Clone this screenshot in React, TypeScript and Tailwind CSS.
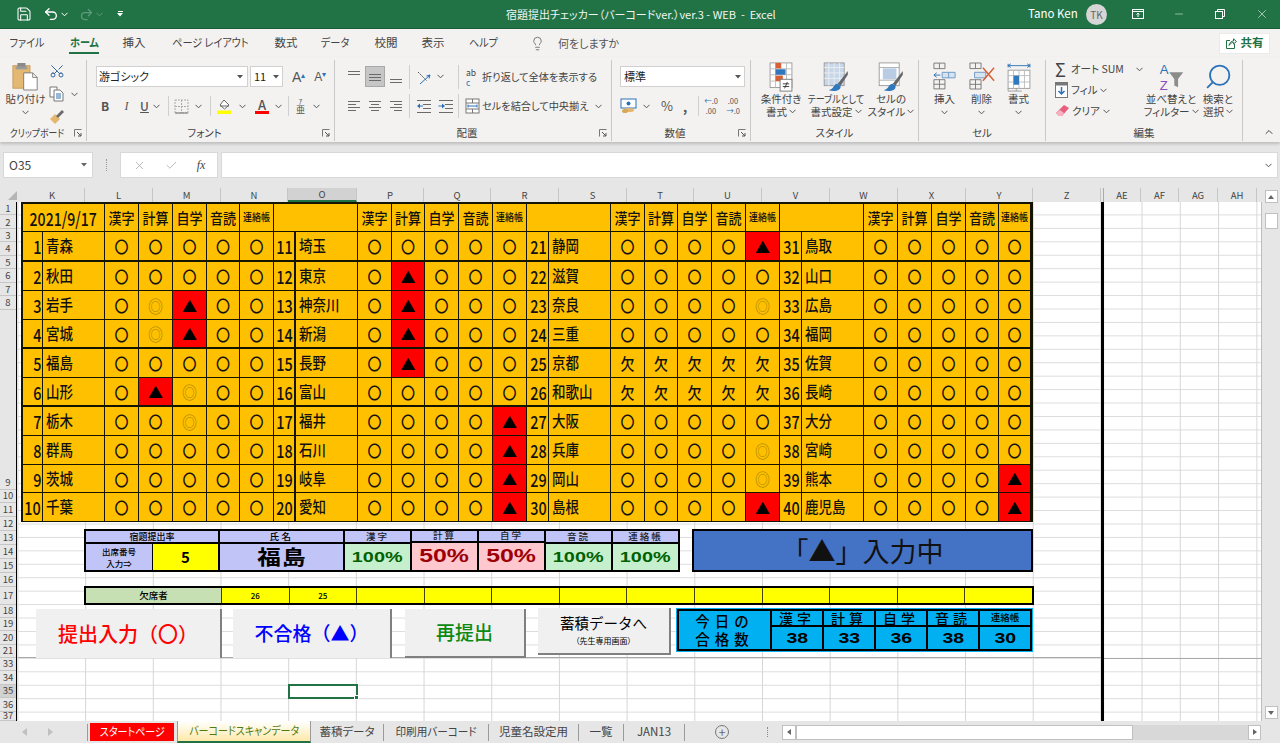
import React from 'react';
import { Save, Undo2, Redo2, Lightbulb, Scissors, X, Minus, Check, ChevronUp, Search } from 'lucide-react';

const Chev = ({ className = '' }: { className?: string }) => (
  <svg width="7" height="5" viewBox="0 0 7 5" className={`shrink-0 ${className}`}>
    <path d="M0.5 0.8 L3.5 3.8 L6.5 0.8" fill="none" stroke="#555" strokeWidth="1" />
  </svg>
);
const Launcher = () => (
  <svg width="8" height="8" viewBox="0 0 8 8" className="shrink-0">
    <path d="M0.5 7.5 V0.5 H7.5" fill="none" stroke="#777" />
    <path d="M3 3 L7 7 M7 4 V7 H4" fill="none" stroke="#555" />
  </svg>
);
const Sep = ({ h = 'h-[24px]' }: { h?: string }) => <div className={`w-px bg-[#cfcfcf] shrink-0 ${h}`} />;

const Lines = ({ rows, color = '#6a6a6a' }: { rows: number[][]; color?: string }) => (
  <svg width="16" height="16" viewBox="0 0 16 16" className="shrink-0">
    {rows.map((r, i) => (
      <rect key={i} x={r[0]} y={r[1]} width={r[2]} height="1" fill={color} />
    ))}
  </svg>
);
const Indent = ({ dir }: { dir: 'l' | 'r' }) => (
  <svg width="16" height="16" viewBox="0 0 16 16" className="shrink-0">
    {[2, 6, 10, 14].map((y) => (
      <rect key={y} x={y === 2 || y === 14 ? 1 : 7} y={y} width={y === 2 || y === 14 ? 14 : 8} height="1" fill="#6a6a6a" />
    ))}
    <path d={dir === 'l' ? 'M1 8 L4 5.5 V7.5 H7 V8.5 H4 V10.5 Z' : 'M7 8 L4 5.5 V7.5 H0.5 V8.5 H4 V10.5 Z'} fill="#2a71b8" />
  </svg>
);

const Paste = () => (
  <svg width="27" height="29" viewBox="0 0 30 32">
    <rect x="1" y="4" width="19" height="25" fill="#e3b873" stroke="#c79a55" />
    <rect x="6" y="1" width="9" height="6" fill="#8a8a8a" />
    <rect x="4" y="5" width="13" height="3" fill="#9a9a9a" />
    <path d="M13 12 H23 L28 17 V31 H13 Z" fill="#fff" stroke="#777" />
    <path d="M23 12 V17 H28" fill="none" stroke="#777" />
  </svg>
);
const CopyIc = () => (
  <svg width="16" height="16" viewBox="0 0 16 16">
    <path d="M1 1 H8 V11 H1 Z" fill="#fff" stroke="#777" />
    <path d="M5 4 H11 L14 7 V15 H5 Z" fill="#fff" stroke="#777" />
    <path d="M7 8 H12 M7 10 H12 M7 12 H12" stroke="#2a71b8" />
  </svg>
);
const Brush = () => (
  <svg width="16" height="16" viewBox="0 0 16 16">
    <path d="M1 10 L6 5 L11 10 L6 15 Z" fill="#e5b66d" />
    <path d="M7 7 L13 1 L15 3 L9 9 Z" fill="#6a6a6a" />
  </svg>
);
const Borders = () => (
  <svg width="15" height="15" viewBox="0 0 15 15">
    <rect x="1" y="1" width="13" height="13" fill="none" stroke="#aaa" strokeDasharray="2 1" />
    <path d="M7.5 1 V14 M1 7.5 H14" stroke="#aaa" strokeDasharray="2 1" />
    <path d="M1 14 H14" stroke="#777" />
  </svg>
);
const Fill = () => (
  <svg width="15" height="16" viewBox="0 0 15 16">
    <path d="M3 7 L7 2 L12 7 L7.5 11 Z" fill="#fff" stroke="#666" />
    <path d="M3 8 H12" stroke="#666" />
    <rect x="0" y="12.5" width="14" height="3.5" fill="#ffff00" />
  </svg>
);
const Orient = () => (
  <svg width="16" height="16" viewBox="0 0 16 16">
    <path d="M2 3 L11 12" stroke="#555" strokeWidth="1" strokeDasharray="2 1" />
    <path d="M14 6 L4 15 M14 6 L10.5 7 M14 6 L13 9.5" fill="none" stroke="#2a71b8" strokeWidth="1" />
  </svg>
);
const Merge = () => (
  <svg width="15" height="16" viewBox="0 0 15 16">
    <rect x="1" y="1" width="13" height="14" fill="#fff" stroke="#777" />
    <path d="M1 5 H14 M1 11 H14 M7.5 1 V5 M7.5 11 V15" stroke="#777" />
    <path d="M3 8 H12" stroke="#2a71b8" />
    <path d="M3 6.5 V9.5 M12 6.5 V9.5" stroke="#2a71b8" />
  </svg>
);
const Currency = () => (
  <svg width="18" height="16" viewBox="0 0 18 16">
    <rect x="1" y="1" width="15" height="9" fill="#fff" stroke="#2a71b8" />
    <circle cx="8.5" cy="5.5" r="2" fill="#2a71b8" />
    <ellipse cx="9" cy="12" rx="5" ry="2" fill="#e5b66d" />
    <ellipse cx="5" cy="13" rx="3" ry="2" fill="#d8a757" />
  </svg>
);
const CondFmt = () => (
  <svg width="24" height="30" viewBox="0 0 26 33">
    <rect x="1" y="1" width="24" height="27" fill="#fff" stroke="#999" />
    <path d="M7 1 V28 M13 1 V28 M19 1 V28 M1 7.5 H25 M1 14 H25 M1 21 H25" stroke="#bbb" />
    <rect x="7" y="1" width="6" height="6" fill="#d95f35" />
    <rect x="7" y="8" width="11" height="6" fill="#2f78bd" />
    <rect x="7" y="15" width="8" height="6" fill="#d95f35" />
    <rect x="12" y="19" width="13" height="13" fill="#fff" stroke="#777" />
    <path d="M15 24 H22 M15 27 H22 M20 22 L17 29" stroke="#333" />
  </svg>
);
const TableFmt = () => (
  <svg width="26" height="30" viewBox="0 0 28 33">
    <rect x="1" y="1" width="22" height="25" fill="#c6d7ea" stroke="#999" />
    <path d="M6 1 V26 M12 1 V26 M18 1 V26 M1 6 H23 M1 12 H23 M1 18 H23" stroke="#eee" />
    <path d="M27 10 L16 24 L19 26 L27 14 Z" fill="#666" />
    <path d="M16 24 C11 24 12 30 6 31 C13 33 20 31 19 26 Z" fill="#2f78bd" />
  </svg>
);
const CellSt = () => (
  <svg width="26" height="30" viewBox="0 0 28 33">
    <rect x="1" y="1" width="22" height="25" fill="#fff" stroke="#999" />
    <rect x="5" y="7" width="15" height="12" fill="#b8cde4" />
    <path d="M1 6 H23 M1 20 H23" stroke="#aaa" />
    <path d="M27 10 L16 24 L19 26 L27 14 Z" fill="#666" />
    <path d="M16 24 C11 24 12 30 6 31 C13 33 20 31 19 26 Z" fill="#2f78bd" />
  </svg>
);
const Ins = () => (
  <svg width="23" height="28" viewBox="0 0 25 30">
    <path d="M1 1 H13 V7 H1 Z M7 1 V7" fill="none" stroke="#777" />
    <path d="M10 11 H24 V17 H10 Z M17 11 V17" fill="#d6e4f2" stroke="#6a96c2" />
    <path d="M1 14 H8 M1 14 L4 11.5 M1 14 L4 16.5" fill="none" stroke="#2a71b8" />
    <path d="M1 19 H13 V29 H1 Z M7 19 V29 M1 24 H13" fill="none" stroke="#777" />
  </svg>
);
const Del = () => (
  <svg width="26" height="28" viewBox="0 0 28 30">
    <path d="M1 1 H13 V7 H1 Z M7 1 V7" fill="none" stroke="#777" />
    <path d="M6 11 H18 V17 H6 Z" fill="#d6e4f2" stroke="#6a96c2" />
    <path d="M1 19 H13 V29 H1 Z M7 19 V29 M1 24 H13" fill="none" stroke="#777" />
    <path d="M15 6 L27 20 M27 6 L15 20" stroke="#d95f35" strokeWidth="1.6" />
  </svg>
);
const Fmt = () => (
  <svg width="24" height="30" viewBox="0 0 26 33">
    <path d="M1 2 V6 M25 2 V6 M1 4 H25 M1 4 L4 2 M1 4 L4 6 M25 4 L22 2 M25 4 L22 6" fill="none" stroke="#2a71b8" />
    <rect x="1" y="9" width="24" height="20" fill="#fff" stroke="#999" />
    <path d="M7 9 V29 M13 9 V29 M19 9 V29 M1 15 H25 M1 22 H25" stroke="#bbb" />
    <rect x="7" y="15" width="6" height="10" fill="#2f78bd" />
    <path d="M1 29 V32 H10 M10 29 V32 H16" fill="none" stroke="#999" />
  </svg>
);
const Sort = () => (
  <svg width="27" height="30" viewBox="0 0 27 32">
    <text x="1" y="13" fontSize="14" fontFamily="'Liberation Sans',sans-serif" fill="#2a71b8">A</text>
    <text x="1" y="30" fontSize="14" fontFamily="'Liberation Sans',sans-serif" fill="#8a4fb5">Z</text>
    <path d="M11 11 H26 L20.5 18 V27 L16.5 25 V18 Z" fill="#8c8c8c" />
  </svg>
);
const Eraser = () => (
  <svg width="16" height="14" viewBox="0 0 16 14">
    <path d="M1 9 L9 1 L14 4 L7 12 H4 Z" fill="#e85f7e" />
    <path d="M1 9 L4 12 H7 L9 9 L5 6 Z" fill="#f6b2bf" />
  </svg>
);
const FillDown = () => (
  <svg width="13" height="16" viewBox="0 0 13 16">
    <rect x="0.5" y="0.5" width="12" height="15" fill="#fff" stroke="#777" />
    <rect x="0.5" y="0.5" width="12" height="3" fill="#777" />
    <path d="M6.5 5 V12 M3.5 9 L6.5 12 L9.5 9" fill="none" stroke="#2a71b8" strokeWidth="1.5" />
  </svg>
);

const MenuItem = ({ t, w, bold, kana }: { t: string; w: string; bold?: boolean; kana?: boolean }) => (
  <div className={`flex flex-col items-center justify-center relative shrink-0 ${w}`}>
    <span className={`text-[11.5px] whitespace-nowrap ${kana ? 'scale-x-[0.88]' : ''} ${bold ? 'font-bold text-[#217346]' : 'text-[#444]'}`}>{t}</span>
    {bold && <div className="absolute bottom-[3px] h-[2px] w-[30px] bg-[#217346]" />}
  </div>
);

const Group = ({ w, label, launcher, tight, children }: { w: string; label: string; launcher?: boolean; tight?: boolean; children: React.ReactNode }) => (
  <div className={`shrink-0 h-[81px] mt-[3px] flex flex-col border-r border-[#c8c8c8] ${w}`}>
    <div className="flex-1 min-h-0 flex">{children}</div>
    <div className="h-[16px] flex items-center text-[10.5px] text-[#444]">
      <div className={`flex-1 text-center whitespace-nowrap ${tight ? 'scale-x-[0.84]' : ''}`}>{label}</div>
      {launcher && <div className="w-[12px] flex"><Launcher /></div>}
    </div>
  </div>
);

const BigBtn = ({ w, icon, l1, l2, narrow }: { w: string; icon: React.ReactNode; l1: string; l2: string; narrow?: boolean }) => (
  <div className={`shrink-0 flex flex-col items-center text-[10.5px] leading-[13px] text-[#444] ${w}`}>
    <div className="h-[31px] pt-[2px] flex items-start">{icon}</div>
    <div className={`mt-[1px] whitespace-nowrap ${narrow ? 'scale-x-[0.86]' : ''}`}>{l1}</div>
    <div className="whitespace-nowrap flex items-center gap-[2px]">{l2}<Chev /></div>
  </div>
);

type G = [number, string, string][];
const groups: G[] = [
  [[1,'青森','ooooo'],[2,'秋田','ooooo'],[3,'岩手','odtoo'],[4,'宮城','odtoo'],[5,'福島','ooooo'],[6,'山形','otdoo'],[7,'栃木','oodoo'],[8,'群馬','ooooo'],[9,'茨城','ooooo'],[10,'千葉','ooooo']],
  [[11,'埼玉','ooooo'],[12,'東京','otooo'],[13,'神奈川','otooo'],[14,'新潟','otooo'],[15,'長野','otooo'],[16,'富山','ooooo'],[17,'福井','oooot'],[18,'石川','oooot'],[19,'岐阜','oooot'],[20,'愛知','oooot']],
  [[21,'静岡','oooot'],[22,'滋賀','ooooo'],[23,'奈良','ooood'],[24,'三重','ooooo'],[25,'京都','kkkkk'],[26,'和歌山','kkkkk'],[27,'大阪','ooooo'],[28,'兵庫','ooood'],[29,'岡山','ooood'],[30,'島根','oooot']],
  [[31,'鳥取','ooooo'],[32,'山口','ooooo'],[33,'広島','ooooo'],[34,'福岡','ooooo'],[35,'佐賀','ooooo'],[36,'長崎','ooooo'],[37,'大分','ooooo'],[38,'宮崎','ooooo'],[39,'熊本','oooot'],[40,'鹿児島','oooot']],
];
const heads = ['漢字', '計算', '自学', '音読', '連絡帳'];

const cellBase = 'flex items-center justify-center border-r border-[#141400] bg-[#ffc000] text-[#111] overflow-hidden';

const Mark = ({ v, b }: { v: string; b: string }) => {
  if (v === 't')
    return <div className={`${cellBase} ${b} !bg-[#ff0000]`}><span className="text-[15px] leading-none text-black">▲</span></div>;
  if (v === 'd')
    return <div className={`${cellBase} ${b}`}><span className="text-[15px] leading-none text-[#a98300] scale-y-[1.1]">◎</span></div>;
  if (v === 'k')
    return <div className={`${cellBase} ${b}`}><span className="text-[14px] leading-none font-medium scale-y-[1.15]">欠</span></div>;
  return <div className={`${cellBase} ${b}`}><span className="text-[14px] leading-none font-medium scale-y-[1.15]">〇</span></div>;
};

const HeadRow = () => (
  <>
    {groups.map((_, g) => (
      <React.Fragment key={g}>
        <div className={`${cellBase} col-span-2 border-b text-[16px] font-medium`}>
          {g === 0 && <span className="scale-x-[0.88] scale-y-[1.15] whitespace-nowrap">2021/9/17</span>}
        </div>
        {heads.map((h) => (
          <div key={h} className={`${cellBase} border-b`}>
            <span className={`whitespace-nowrap font-medium scale-y-[1.15] ${h === '連絡帳' ? 'text-[9px]' : 'text-[13px]'}`}>{h}</span>
          </div>
        ))}
      </React.Fragment>
    ))}
  </>
);

const Stat = ({ h, v, ok }: { h: string; v: string; ok: boolean }) => (
  <div className="w-[67px] flex flex-col shrink-0 border-r-2 border-black">
    <div className="h-[13px] bg-[#c0c4f6] border-b-2 border-black flex items-center justify-center text-[9.5px] font-medium text-[#222] tracking-[2px] leading-none">{h}</div>
    <div className={`flex-1 flex items-center justify-center ${ok ? 'bg-[#c6efce] text-[#006100]' : 'bg-[#ffc7ce] text-[#9c0006]'}`}>
      <span className={`[font-family:'Liberation_Sans',sans-serif] font-bold ${ok ? 'text-[15px] scale-x-[1.32]' : 'text-[18px] scale-x-[1.38]'}`}>{v}</span>
    </div>
  </div>
);

const colHeads: [string, string, boolean?][] = [
  ['K','w-[65px]'],['L','w-[68px]'],['M','w-[68px]'],['N','w-[67px]'],['O','w-[69px]',true],['P','w-[67px]'],['Q','w-[67px]'],['R','w-[68px]'],['S','w-[68px]'],['T','w-[67px]'],['U','w-[68px]'],['V','w-[68px]'],['W','w-[68px]'],['X','w-[68px]'],['Y','w-[67px]'],['Z','w-[68px]'],
];
const rh1 = [1,2,3,4,5,6,7,8];
const rh2: [number, string][] = [[9,'h-[13px]'],[10,'h-[13px]'],[11,'h-[14px]'],[12,'h-[14px]'],[13,'h-[14px]'],[14,'h-[14px]'],[15,'h-[14px]'],[16,'h-[14px]'],[17,'h-[18px]'],[18,'h-[13px]'],[19,'h-[13px]'],[20,'h-[14px]'],[21,'h-[13px]'],[33,'h-[13px]'],[34,'h-[14px]'],[35,'h-[13px]'],[36,'h-[14px]'],[37,'h-[9px]']];

const SheetTab = ({ t, w, kana }: { t: string; w: string; kana?: boolean }) => (
  <div className={`shrink-0 flex items-center justify-center border-r border-[#9a9a9a] h-[17px] text-[11.5px] text-[#444] whitespace-nowrap ${w}`}>
    <span className={kana ? 'scale-x-[0.92]' : ''}>{t}</span>
  </div>
);

export default function App() {
  return (
    <div className="w-[1280px] h-[743px] overflow-hidden flex flex-col bg-[#e6e6e6] [font-family:'Noto_Sans_CJK_JP','Liberation_Sans',sans-serif] [font-feature-settings:'palt']">
      {/* title bar */}
      <div className="h-[29px] shrink-0 bg-[#217346] border-b border-[#1a5e39] flex items-center text-white">
        <Save size={16} strokeWidth={1.6} className="ml-[16px]" />
        <Undo2 size={16} strokeWidth={2} className="ml-[11px]" />
        <svg width="7" height="5" viewBox="0 0 7 5" className="ml-[2px]"><path d="M0.5 0.8 L3.5 3.8 L6.5 0.8" fill="none" stroke="#fff" /></svg>
        <Redo2 size={15} strokeWidth={2} className="ml-[11px] text-[#5f9a7c]" />
        <svg width="7" height="5" viewBox="0 0 7 5" className="ml-[2px]"><path d="M0.5 0.8 L3.5 3.8 L6.5 0.8" fill="none" stroke="#5f9a7c" /></svg>
        <div className="ml-[14px] flex flex-col items-center gap-[1px]">
          <div className="w-[5px] h-px bg-white" />
          <svg width="6" height="4" viewBox="0 0 6 4"><path d="M0 0 H6 L3 3.5 Z" fill="#fff" /></svg>
        </div>
        <div className="w-[383px] shrink-0" />
        <div className="w-[274px] shrink-0 text-[11px] whitespace-nowrap text-[#f0f5f2]">宿題提出チェッカー（バーコードver.）ver.3 - WEB&nbsp;&nbsp;-&nbsp;&nbsp;Excel</div>
        <div className="w-[248px] shrink-0" />
        <div className="w-[54px] shrink-0 text-[11.5px] whitespace-nowrap">Tano Ken</div>
        <div className="w-[21px] h-[21px] shrink-0 ml-[4px] rounded-full bg-[#d6d6d6] text-[#666] text-[10px] flex items-center justify-center">TK</div>
        <svg width="12" height="12" viewBox="0 0 12 12" className="ml-[25px] shrink-0"><rect x="0.5" y="1.5" width="11" height="9" fill="none" stroke="#fff" /><path d="M0.5 3.5 H11.5 M6 9 V5 M4.5 6.5 L6 5 L7.5 6.5" fill="none" stroke="#fff" /></svg>
        <Minus size={12} strokeWidth={1} className="ml-[29px] shrink-0" />
        <svg width="10" height="10" viewBox="0 0 10 10" className="ml-[30px] shrink-0"><rect x="0.5" y="2.5" width="7" height="7" fill="none" stroke="#fff" /><path d="M2.5 2.5 V0.5 H9.5 V7.5 H7.5" fill="none" stroke="#fff" /></svg>
        <X size={14} strokeWidth={1} className="ml-[30px] shrink-0" />
      </div>

      {/* menu */}
      <div className="h-[28px] shrink-0 bg-[#f3f2f1] flex items-stretch">
        <MenuItem t="ファイル" w="w-[54px]" kana />
        <MenuItem t="ホーム" w="w-[60px]" bold kana />
        <MenuItem t="挿入" w="w-[40px]" />
        <MenuItem t="ページ レイアウト" w="w-[112px]" kana />
        <MenuItem t="数式" w="w-[40px]" />
        <MenuItem t="データ" w="w-[58px]" kana />
        <MenuItem t="校閲" w="w-[44px]" />
        <MenuItem t="表示" w="w-[50px]" />
        <MenuItem t="ヘルプ" w="w-[50px]" kana />
        <div className="flex items-center w-[711px] shrink-0 text-[#555] text-[11px]">
          <Lightbulb size={15} strokeWidth={1.2} className="ml-[22px]" />
          <span className="ml-[13px] whitespace-nowrap">何をしますか</span>
        </div>
        <div className="self-center w-[51px] h-[21px] shrink-0 bg-white border border-[#eaeaea] flex items-center justify-center gap-[4px] text-[#217346] text-[11.5px] font-bold whitespace-nowrap">
          <svg width="11" height="11" viewBox="0 0 11 11"><path d="M4 2.5 H0.5 V10.5 H8.5 V6 M3 7.5 C3.5 4.5 5.5 3 7.5 3 V0.8 L10.5 3.5 L7.5 6 V4.5 C6 4.5 4.5 5 3 7.5 Z" fill="none" stroke="#217346" /></svg>
          共有
        </div>
      </div>

      {/* ribbon */}
      <div className="h-[85px] shrink-0 bg-[#f3f2f1] flex shadow-[0_2px_3px_rgba(0,0,0,0.18)] relative text-[#444]">
        <Group w="w-[87px]" label="クリップボード" launcher tight>
          <div className="w-[49px] flex flex-col items-center pt-[2px] pl-[2px] text-[10.5px] leading-[13px]">
            <Paste />
            <div className="mt-[1px] whitespace-nowrap">貼り付け</div>
            <Chev className="mt-[5px]" />
          </div>
          <div className="flex flex-col gap-[7px] pt-[3px]">
            <Scissors size={16} strokeWidth={1.4} className="text-[#2a5f94] -rotate-90" />
            <div className="flex items-center gap-[6px]"><CopyIc /><Chev /></div>
            <Brush />
          </div>
        </Group>

        <Group w="w-[248px]" label="フォント" launcher>
          <div className="flex flex-col pl-[9px] pt-[6px]">
            <div className="flex items-center h-[21px]">
              <div className="w-[152px] h-[21px] bg-white border border-[#d0d0d0] flex items-center px-[2px] text-[11px] text-[#222] justify-between">
                <span>游ゴシック</span>
                <svg width="6" height="4" viewBox="0 0 6 4" className="mr-[2px]"><path d="M0 0 H6 L3 3.5 Z" fill="#555" /></svg>
              </div>
              <div className="w-[33px] h-[21px] ml-[2px] bg-white border border-[#d0d0d0] flex items-center px-[3px] text-[11px] text-[#222] justify-between">
                <span>11</span>
                <svg width="6" height="4" viewBox="0 0 6 4"><path d="M0 0 H6 L3 3.5 Z" fill="#555" /></svg>
              </div>
              <span className="ml-[9px] text-[14px] leading-none text-[#555] [font-family:'Liberation_Sans',sans-serif]">A<sup className="text-[8px] text-[#2a71b8]">▴</sup></span>
              <span className="ml-[9px] text-[12px] leading-none text-[#555] [font-family:'Liberation_Sans',sans-serif]">A<sup className="text-[8px] text-[#2a71b8]">▾</sup></span>
            </div>
            <div className="flex items-center h-[20px] mt-[9px] text-[12px] text-[#555]">
              <span className="w-[22px] text-center font-bold ml-[-2px]">B</span>
              <span className="w-[21px] text-center italic [font-family:'Liberation_Serif',serif]">I</span>
              <span className="w-[15px] text-center underline font-medium">U</span>
              <Chev className="ml-[1px]" />
              <div className="w-[8px]" /><Sep h="h-[20px]" /><div className="w-[5px]" />
              <Borders />
              <Chev className="ml-[6px]" />
              <div className="w-[8px]" /><Sep h="h-[20px]" /><div className="w-[6px]" />
              <Fill />
              <Chev className="ml-[7px]" />
              <div className="w-[9px] shrink-0" />
              <div className="flex flex-col items-center w-[14px] leading-[12px]">
                <span className="text-[13px] font-medium text-[#555]">A</span>
                <div className="w-[14px] h-[3px] bg-[#ff0000]" />
              </div>
              <Chev className="ml-[6px]" />
              <div className="w-[6px]" /><Sep h="h-[20px]" /><div className="w-[7px]" />
              <div className="flex flex-col items-center w-[9px]"><span className="text-[7px] leading-[8px]">ｱ</span><span className="text-[9px] leading-[10px]">亜</span></div>
              <Chev className="ml-[8px]" />
            </div>
          </div>
        </Group>

        <Group w="w-[277px]" label="配置" launcher>
          <div className="flex flex-col pl-[9px] pt-[6px]">
            <div className="flex items-center h-[21px]">
              <div className="w-[20px] flex justify-center"><Lines rows={[[2,2,12],[2,5,12]]} /></div>
              <div className="ml-[1px] w-[20px] h-[21px] bg-[#c6c6c6] border border-[#a8a8a8] flex items-center justify-center"><Lines rows={[[2,5,12],[2,8,12],[2,11,12]]} /></div>
              <div className="ml-[1px] w-[20px] flex justify-center"><Lines rows={[[2,10,12],[2,13,12]]} /></div>
              <div className="w-[3px]" /><Sep />
              <div className="ml-[6px]"><Orient /></div>
              <Chev className="ml-[5px]" />
              <div className="w-[14px]" /><Sep />
              <div className="ml-[7px] w-[13px] flex flex-col text-[8.5px] leading-[10px] text-[#444]"><span>ab</span><span className="text-[#2a71b8]">c</span></div>
              <span className="ml-[3px] text-[10.2px] whitespace-nowrap">折り返して全体を表示する</span>
            </div>
            <div className="flex items-center h-[20px] mt-[9px]">
              <div className="w-[20px] flex justify-center"><Lines rows={[[2,3,12],[2,6,8],[2,9,12],[2,12,8]]} /></div>
              <div className="ml-[1px] w-[20px] flex justify-center"><Lines rows={[[2,3,12],[4,6,8],[2,9,12],[4,12,8]]} /></div>
              <div className="ml-[1px] w-[20px] flex justify-center"><Lines rows={[[2,3,12],[6,6,8],[2,9,12],[6,12,8]]} /></div>
              <div className="w-[3px]" /><Sep />
              <div className="ml-[6px]"><Indent dir="l" /></div>
              <div className="ml-[6px]"><Indent dir="r" /></div>
              <div className="w-[4px]" /><Sep />
              <div className="ml-[6px]"><Merge /></div>
              <span className="ml-[2px] text-[10.2px] whitespace-nowrap">セルを結合して中央揃え</span>
              <Chev className="ml-[7px]" />
            </div>
          </div>
        </Group>

        <Group w="w-[139px]" label="数値" launcher>
          <div className="flex flex-col pl-[8px] pt-[6px]">
            <div className="w-[125px] h-[21px] bg-white border border-[#d0d0d0] flex items-center justify-between px-[3px] text-[11px] text-[#222]">
              <span>標準</span>
              <svg width="6" height="4" viewBox="0 0 6 4"><path d="M0 0 H6 L3 3.5 Z" fill="#555" /></svg>
            </div>
            <div className="flex items-center h-[20px] mt-[9px] text-[#555]">
              <Currency />
              <Chev className="ml-[5px]" />
              <span className="ml-[9px] text-[13px] w-[16px] text-center">%</span>
              <span className="ml-[5px] text-[13px] font-bold w-[10px] text-center leading-none">,</span>
              <div className="w-[8px]" /><Sep h="h-[20px]" />
              <div className="ml-[4px] w-[16px] flex flex-col text-[7.5px] leading-[10px] text-center whitespace-nowrap"><span><span className="text-[#2a71b8]">←</span>.0</span><span>.00</span></div>
              <div className="ml-[6px] w-[16px] flex flex-col text-[7.5px] leading-[10px] text-center whitespace-nowrap"><span>.00</span><span><span className="text-[#2a71b8]">→</span>.0</span></div>
            </div>
          </div>
        </Group>

        <Group w="w-[168px]" label="スタイル">
          <BigBtn w="w-[56px] ml-[2px]" icon={<CondFmt />} l1="条件付き" l2="書式" />
          <BigBtn w="w-[54px]" icon={<TableFmt />} l1="テーブルとして" l2="書式設定" narrow />
          <BigBtn w="w-[56px]" icon={<CellSt />} l1="セルの" l2="スタイル" />
        </Group>

        <Group w="w-[127px]" label="セル">
          <div className="w-[7px] shrink-0" />
          {[['挿入', <Ins key="i" />], ['削除', <Del key="d" />], ['書式', <Fmt key="f" />]].map(([t, ic]) => (
            <div key={t as string} className="w-[37px] shrink-0 flex flex-col items-center text-[10.5px] leading-[13px]">
              <div className="h-[31px] pt-[2px] flex items-start">{ic}</div>
              <div className="mt-[1px]">{t}</div>
              <Chev className="mt-[5px]" />
            </div>
          ))}
        </Group>

        <Group w="w-[197px]" label="編集">
          <div className="w-[103px] shrink-0 flex flex-col pl-[9px] text-[10.5px] gap-[3px]">
            <div className="h-[18px] flex items-center whitespace-nowrap"><span className="text-[18px] leading-none w-[14px] text-[#444]">Σ</span><span className="ml-[2px]">オート SUM</span><Chev className="ml-[12px]" /></div>
            <div className="h-[18px] flex items-center whitespace-nowrap"><FillDown /><span className="ml-[3px]">フィル</span><Chev className="ml-[3px]" /></div>
            <div className="h-[18px] flex items-center whitespace-nowrap"><Eraser /><span className="ml-[1px]">クリア</span><Chev className="ml-[3px]" /></div>
          </div>
          <BigBtn w="w-[44px]" icon={<Sort />} l1="並べ替えと" l2="フィルター" />
          <BigBtn w="w-[38px] ml-[6px]" icon={<Search size={29} strokeWidth={1.5} className="text-[#2a71b8] -scale-x-100" />} l1="検索と" l2="選択" />
        </Group>

        <div className="flex-1 flex items-end justify-end pb-[4px] pr-[5px]"><ChevronUp size={12} /></div>
      </div>

      {/* formula bar */}
      <div className="h-[26px] mt-[10px] shrink-0 flex text-[#444]">
        <div className="ml-[3px] w-[90px] bg-white border border-[#d8d8d8] flex items-center justify-between px-[5px] text-[12px]">
          <span>O35</span>
          <svg width="6" height="4" viewBox="0 0 6 4"><path d="M0 0 H6 L3 3.5 Z" fill="#666" /></svg>
        </div>
        <div className="w-[27px] shrink-0 flex items-center justify-center"><div className="h-[12px] border-l border-dotted border-[#999]" /></div>
        <div className="w-[98px] bg-white border border-[#d8d8d8] flex items-center justify-around px-[2px] text-[#aaa]">
          <X size={13} strokeWidth={1.5} />
          <Check size={13} strokeWidth={1.5} />
          <span className="text-[#444] italic [font-family:'Liberation_Serif',serif] text-[12px]">fx</span>
        </div>
        <div className="ml-[3px] w-[1057px] bg-white border border-[#d8d8d8] flex items-center justify-end pr-[5px]"><Chev /></div>
      </div>

      {/* sheet */}
      <div className="mt-[10px] h-[533px] shrink-0 flex">
        <div className="w-[1263px] shrink-0 flex flex-col">
          <div className="h-[14px] flex shrink-0 text-[9.5px] text-[#444]">
            <div className="w-[20px] shrink-0 flex items-end justify-end pr-[3px] pb-[2px]"><svg width="9" height="9" viewBox="0 0 9 9"><path d="M9 0 V9 H0 Z" fill="#b5b5b5" /></svg></div>
            {colHeads.map(([c, w, sel]) => (
              <div key={c} className={`shrink-0 flex items-center justify-center border-r border-[#c6c6c6] ${w} ${sel ? 'bg-[#d2d2d2] border-b-2 border-b-[#217346]' : ''}`}>{c}</div>
            ))}
            <div className="w-[3px] shrink-0 border-r border-[#aaa]" />
            {[['AE','w-[37px]'],['AF','w-[38px]'],['AG','w-[39px]'],['AH','w-[39px]']].map(([c, w]) => (
              <div key={c} className={`shrink-0 flex items-center justify-center border-r border-[#c6c6c6] ${w}`}>{c}</div>
            ))}
          </div>
          <div className="flex-1 min-h-0 flex">
            {/* row headers */}
            <div className="w-[16px] shrink-0 flex flex-col text-[9.5px] text-[#444]">
              {rh1.map((n) => (
                <div key={n} className="h-[13.45px] shrink-0 flex items-center justify-center border-b border-[#c6c6c6]">{n}</div>
              ))}
              <div className="h-[167px] shrink-0" />
              {rh2.map(([n, h]) => (
                <div key={n} className={`shrink-0 flex items-center justify-center border-b border-[#c6c6c6] ${h} ${n === 35 ? 'bg-[#d2d2d2]' : ''}`}>{n}</div>
              ))}
            </div>
            <div className="w-[1px] shrink-0 bg-black" />
            <div className="w-[1px] shrink-0 bg-[#ffff00]" />
            {/* main pane */}
            <div className="w-[1083px] shrink-0 flex flex-col bg-white bg-[linear-gradient(to_right,#d6d6d6_1px,transparent_1px),linear-gradient(to_bottom,#dcdcdc_1px,transparent_1px)] bg-[size:67.7px_13.45px] bg-[position:-0.6px_-1px]">
              <div className="ml-[3px] w-[1012px] border-l-2 border-t-2 border-r-2 border-[#141400] grid grid-cols-[20px_62px_34px_34px_34px_33px_34px_22px_62px_34px_33px_34px_34px_34px_22px_62px_34px_33px_34px_34px_34px_22px_62px_34px_34px_34px_33px_32px] grid-rows-[28px_30px_29px_29px_29px_29px_29px_29px_29px_28px_29px]">
                <HeadRow />
                {Array.from({ length: 10 }).map((_, r) => {
                  const b = r === 0 || r === 3 || r === 5 ? 'border-b-2' : 'border-b';
                  return groups.map((g, gi) => {
                    const [n, name, marks] = g[r];
                    return (
                      <React.Fragment key={n}>
                        <div className={`${cellBase} ${b} !justify-end ${gi === 1 ? 'border-r-2' : ''}`}>
                          <span className="text-[18px] leading-none font-medium scale-x-[0.8] origin-right pr-[1px]">{n}</span>
                        </div>
                        <div className={`${cellBase} ${b} !justify-start pl-[3px]`}>
                          <span className="text-[13.5px] leading-none whitespace-nowrap font-medium scale-y-[1.15]">{name}</span>
                        </div>
                        {marks.split('').map((m, i) => <Mark key={i} v={m} b={b} />)}
                      </React.Fragment>
                    );
                  });
                })}
              </div>

              {/* summary */}
              <div className="ml-[66px] mt-[7px] h-[43px] flex shrink-0">
                <div className="w-[136px] shrink-0 border-2 border-black flex flex-col bg-[#c0c4f6]">
                  <div className="h-[13px] border-b-2 border-black flex items-center justify-center text-[9px] font-medium leading-none">宿題提出率</div>
                  <div className="flex-1 flex">
                    <div className="w-[67px] border-r border-black flex flex-col items-center justify-center text-[8.5px] leading-[12px] font-medium">
                      <span>出席番号</span><span>入力⇒</span>
                    </div>
                    <div className="flex-1 bg-[#ffff00] flex items-center justify-center text-[15px] font-bold">5</div>
                  </div>
                </div>
                <div className="w-[125px] shrink-0 border-y-2 border-r-2 border-black flex flex-col bg-[#c0c4f6]">
                  <div className="h-[13px] border-b-2 border-black flex items-center justify-center text-[9.5px] font-medium tracking-[2.5px] leading-none">氏名</div>
                  <div className="flex-1 flex items-center justify-center">
                    <span className="text-[20px] font-bold tracking-[1px] scale-x-[1.18] leading-none">福島</span>
                  </div>
                </div>
                <div className="flex border-y-2 border-black bg-[#c0c4f6]">
                  <Stat h="漢字" v="100%" ok />
                  <Stat h="計算" v="50%" ok={false} />
                  <Stat h="自学" v="50%" ok={false} />
                  <Stat h="音読" v="100%" ok />
                  <Stat h="連絡帳" v="100%" ok />
                </div>
                <div className="ml-[12px] w-[341px] shrink-0 bg-[#4472c4] border-2 border-black flex items-center justify-center text-[27px] text-[#111] leading-none [font-feature-settings:normal]">「▲」入力中</div>
              </div>

              {/* absent */}
              <div className="ml-[66px] mt-[14px] w-[950px] h-[19px] flex shrink-0 border-2 border-black bg-[#ffff00]">
                <div className="w-[135px] shrink-0 bg-[#c6e0b4] flex items-center justify-center text-[9.5px] font-medium">欠席者</div>
                {['26','25','','','','','','','','','',''].map((t, i) => (
                  <div key={i} className="flex-1 border-l border-[#444400] flex items-center justify-center text-[8px] font-medium">{t}</div>
                ))}
              </div>

              {/* buttons */}
              <div className="mt-[3px] h-[50px] flex shrink-0 border-b border-[#a8a8a8] pl-[18px]">
                <div className="w-[186px] h-[49px] mt-px shrink-0 bg-[#f0f0f0] border-r-2 border-[#808080] flex items-center justify-center text-[#ff0000] text-[20px] font-medium whitespace-nowrap [font-feature-settings:normal]">提出入力（〇）</div>
                <div className="ml-[11px] w-[159px] h-[49px] mt-px shrink-0 bg-[#f0f0f0] border-r-2 border-[#808080] flex items-center justify-center text-[#0000ff] text-[19px] font-medium whitespace-nowrap [font-feature-settings:normal]">不合格（▲）</div>
                <div className="ml-[13px] w-[121px] h-[49px] mt-px shrink-0 bg-[#f0f0f0] border-r-2 border-b-2 border-[#808080] flex items-center justify-center text-[#0a8a12] text-[19px] font-medium whitespace-nowrap">再提出</div>
                <div className="ml-[12px] w-[133px] h-[47px] shrink-0 bg-[#f0f0f0] border-r-2 border-b-2 border-[#808080] flex flex-col items-center justify-center text-black whitespace-nowrap">
                  <span className="text-[14.5px] leading-[18px] [font-feature-settings:normal]">蓄積データへ</span>
                  <span className="text-[8px] leading-[12px] mt-[3px]">（先生専用画面）</span>
                </div>
                <div className="ml-[5px] w-[357px] h-[44px] shrink-0 bg-[#00b0f0] p-px">
                  <div className="h-full flex border-2 border-black">
                    <div className="w-[93px] shrink-0 border-r-2 border-black flex flex-col items-center justify-center text-[14.5px] font-medium leading-[18px] tracking-[5px] [font-feature-settings:normal]">
                      <span>今日の</span><span>合格数</span>
                    </div>
                    {[['漢字','38'],['計算','33'],['自学','36'],['音読','38'],['連絡帳','30']].map(([h, v], i) => (
                      <div key={h} className={`flex-1 flex flex-col ${i < 4 ? 'border-r-2 border-black' : ''}`}>
                        <div className="h-[20px] border-b-2 border-black flex items-center justify-center leading-none">
                          <span className={`font-medium whitespace-nowrap ${h === '連絡帳' ? 'text-[9.5px]' : 'text-[14px] tracking-[4px]'}`}>{h}</span>
                        </div>
                        <div className="flex-1 flex items-center justify-center text-[15px] font-bold [font-family:'Liberation_Sans',sans-serif]"><span className="scale-x-[1.3]">{v}</span></div>
                      </div>
                    ))}
                  </div>
                </div>
              </div>

              {/* selected cell */}
              <div className="ml-[270px] mt-[26px] w-[70px] h-[15px] shrink-0 border-2 border-[#217346] relative">
                <div className="absolute -right-[3px] -bottom-[3px] w-[5px] h-[5px] bg-[#217346] border border-white" />
              </div>
            </div>
            <div className="w-[3px] shrink-0 bg-black" />
            {/* right pane */}
            <div className="w-[158px] shrink-0 flex flex-col bg-white border-r border-[#bdbdbd] bg-[linear-gradient(to_right,#d6d6d6_1px,transparent_1px),linear-gradient(to_bottom,#dcdcdc_1px,transparent_1px)] bg-[size:38.3px_13.45px] bg-[position:-0.8px_-1px]">
              <div className="mt-[456px] h-px shrink-0 bg-[#a8a8a8]" />
            </div>
          </div>
        </div>
        {/* v-scroll */}
        <div className="w-[17px] shrink-0 flex flex-col items-center pt-[2px] pb-[2px] pr-[1px]">
          <div className="w-[13px] h-[13px] bg-white border border-[#c0c0c0] flex items-center justify-center"><svg width="6" height="4" viewBox="0 0 6 4"><path d="M0 4 H6 L3 0 Z" fill="#666" /></svg></div>
          <div className="mt-[10px] w-[13px] h-[16px] bg-white border border-[#c0c0c0]" />
          <div className="flex-1" />
          <div className="w-[13px] h-[13px] bg-white border border-[#c0c0c0] flex items-center justify-center"><svg width="6" height="4" viewBox="0 0 6 4"><path d="M0 0 H6 L3 4 Z" fill="#666" /></svg></div>
        </div>
      </div>

      {/* tabs */}
      <div className="flex-1 min-h-0 flex items-center">
        <div className="w-[87px] shrink-0 flex items-center text-[#b0b0b0]">
          <svg width="5" height="8" viewBox="0 0 5 8" className="ml-[22px]"><path d="M5 0 V8 L0 4 Z" fill="#c0c0c0" /></svg>
          <svg width="5" height="8" viewBox="0 0 5 8" className="ml-[21px]"><path d="M0 0 V8 L5 4 Z" fill="#c0c0c0" /></svg>
        </div>
        <div className="w-px h-[17px] bg-[#9a9a9a] shrink-0" />
        <div className="ml-[2px] w-[84px] h-[18px] shrink-0 bg-[#ff0000] text-white text-[11.5px] flex items-center justify-center whitespace-nowrap"><span className="scale-x-[0.87]">スタートページ</span></div>
        <div className="ml-[3px] w-[134px] h-[22px] shrink-0 bg-[linear-gradient(to_bottom,#ffffff,#ffe9a8)] border-x border-[#9a9a9a] border-b-2 border-b-[#217346] text-[#4e7d12] text-[11.5px] flex items-center justify-center whitespace-nowrap"><span className="scale-x-[0.87]">バーコードスキャンデータ</span></div>
        <SheetTab t="蓄積データ" w="w-[73px]" />
        <SheetTab t="印刷用バーコード" w="w-[105px]" kana />
        <SheetTab t="児童名設定用" w="w-[90px]" />
        <SheetTab t="一覧" w="w-[45px]" />
        <SheetTab t="JAN13" w="w-[61px]" />
        <div className="ml-[30px] w-[14px] h-[14px] shrink-0 rounded-full border border-[#777] text-[#666] flex items-center justify-center text-[12px] leading-none">+</div>
        <div className="ml-[38px] h-[10px] border-l border-dotted border-[#888] shrink-0" />
        <div className="ml-[14px] w-[479px] h-[15px] shrink-0 bg-[#d8d8d8] flex items-center">
          <div className="w-[14px] h-[15px] bg-white border border-[#c0c0c0] flex items-center justify-center"><svg width="4" height="6" viewBox="0 0 4 6"><path d="M4 0 V6 L0 3 Z" fill="#666" /></svg></div>
          <div className="w-[337px] h-[15px] bg-white border border-[#c0c0c0]" />
          <div className="flex-1" />
          <div className="w-[13px] h-[15px] bg-white border border-[#c0c0c0] flex items-center justify-center"><svg width="4" height="6" viewBox="0 0 4 6"><path d="M0 0 V6 L4 3 Z" fill="#666" /></svg></div>
        </div>
      </div>
    </div>
  );
}
